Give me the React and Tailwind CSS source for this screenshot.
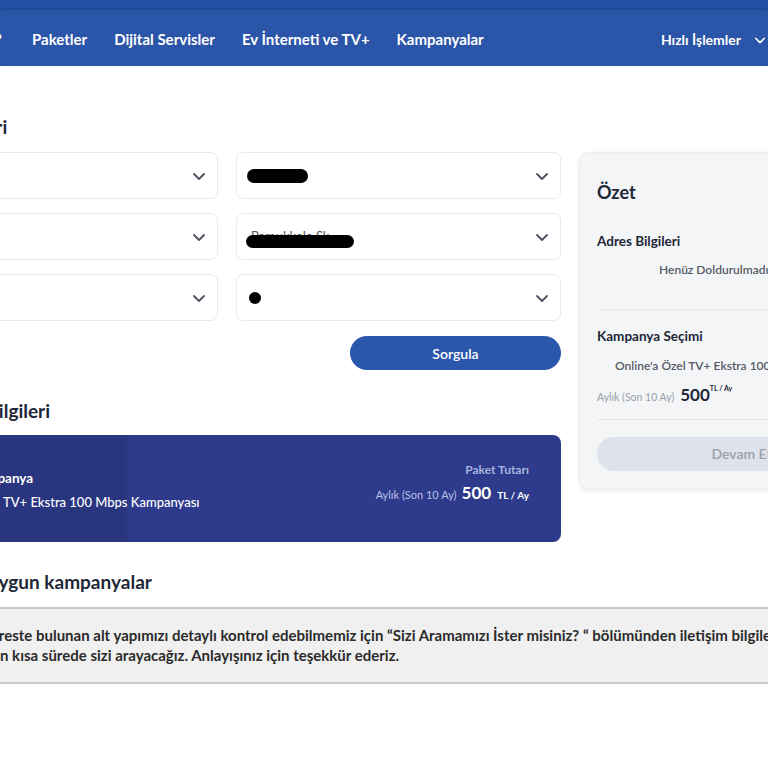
import React from "react";

function Chevron({ className = "" }) {
  return (
    <svg viewBox="0 0 16 16" className={className} fill="none" stroke="currentColor" strokeWidth="1.8" strokeLinecap="round" strokeLinejoin="round">
      <path d="M3 6l5 5 5-5" />
    </svg>
  );
}

function Select({ children }) {
  return (
    <div className="relative h-[47px] rounded-[7px] border border-[#e9eaee] bg-white flex items-center pl-[10px] pr-[10px]">
      <div className="flex-1 relative h-full flex items-center">{children}</div>
      <Chevron className="w-[16px] h-[16px] text-[#4b5162]" />
    </div>
  );
}

export default function App() {
  return (
    <div className="w-[768px] h-[768px] overflow-hidden bg-white relative font-['Lato',sans-serif] text-[#1f2937]">
      {/* header */}
      <div className="h-[10px] bg-[#244fa3]" />
      <div className="h-[56px] bg-[#2b55a9] flex items-center pt-[3px] text-white text-[15px] font-bold shadow-[0_-1px_3px_rgba(0,0,0,0.15)]">
        <span className="text-[15px] leading-none ml-[-5px] w-[9px] overflow-hidden">?</span>
        <div className="ml-[28px] flex items-center gap-[27px]">
          <span>Paketler</span>
          <span>Dijital Servisler</span>
          <span>Ev İnterneti ve TV+</span>
          <span>Kampanyalar</span>
        </div>
        <div className="ml-auto flex items-center gap-[12px] pr-[1px] text-[14px]">
          <span>Hızlı İşlemler</span>
          <Chevron className="w-[14px] h-[14px]" />
        </div>
      </div>

      {/* main */}
      <div className="flex gap-[18px] ml-[-107px] pt-[49px]">
        {/* left column */}
        <div className="w-[668px] shrink-0">
          <h2 className="text-[19px] leading-[24px] font-bold text-[#1e2737] mb-[13px] ml-[-3px]">Adres Bilgileri</h2>
          <div className="grid grid-cols-2 gap-x-[18px] gap-y-[14px]">
            <Select />
            <Select>
              <span className="block w-[61px] h-[14px] bg-black rounded-full" />
            </Select>
            <Select />
            <Select>
              <span className="text-[13px] text-[#555] ml-[4px]">Pamukkale Sk.</span>
              <span className="absolute left-[-1px] top-[21px] w-[108px] h-[13px] bg-black rounded-full" />
            </Select>
            <Select />
            <Select>
              <span className="block w-[12px] h-[12px] bg-black rounded-full ml-[2px]" />
            </Select>
          </div>
          <div className="flex justify-end mt-[15px]">
            <button className="w-[211px] h-[34px] rounded-full bg-[#2a56ab] text-white text-[14px] font-semibold">Sorgula</button>
          </div>

          <h2 className="text-[19px] leading-[24px] font-bold text-[#1e2737] mt-[29px] mb-[12px]">Kampanya Bilgileri</h2>
          <div className="h-[107px] rounded-[8px] flex items-stretch text-white bg-[linear-gradient(to_right,#29357f_0px,#29357f_232px,#2e3b8c_236px,#2e3b8c_100%)]">
            <div className="flex flex-col justify-center pl-[31px] pt-[3px]">
              <div className="text-[13.5px] font-bold leading-[24px]">Seçilen Kampanya</div>
              <div className="text-[13px] leading-[24px] font-medium">Online'a Özel TV+ Ekstra 100 Mbps Kampanyası</div>
            </div>
            <div className="ml-auto pr-[32px] pt-[27px] flex flex-col items-end">
              <div className="text-[12px] font-bold text-[#aab3df] leading-[16px]">Paket Tutarı</div>
              <div className="flex items-baseline gap-[5px] mt-[2px]">
                <span className="text-[11px] text-[#b9c1e8]">Aylık (Son 10 Ay)</span>
                <span className="text-[17px] font-bold">500</span>
                <span className="text-[10px] font-bold ml-[1px]">TL / Ay</span>
              </div>
            </div>
          </div>

          <h2 className="text-[19px] leading-[24px] font-bold text-[#1e2737] mt-[28px] ml-[2px]">Adresinize uygun kampanyalar</h2>
        </div>

        {/* right column */}
        <div className="w-[325px] shrink-0 mt-[37px]">
          <div className="h-[338px] rounded-[10px] bg-[#f4f5f7] border border-[#eceef1] shadow-[0_1px_4px_rgba(0,0,0,0.08)] px-[17px] pt-[27px]">
            <div className="text-[18px] leading-[24px] font-bold text-[#1e2737]">Özet</div>
            <div className="text-[13.5px] leading-[20px] font-bold text-[#1e2737] mt-[27px]">Adres Bilgileri</div>
            <div className="text-[12px] leading-[18px] font-semibold text-[#555b66] mt-[10px] pl-[62px] whitespace-nowrap">Henüz Doldurulmadı</div>
            <div className="h-px bg-[#e4e6ea] mt-[30px]" />
            <div className="text-[13.5px] leading-[20px] font-bold text-[#1e2737] mt-[16px]">Kampanya Seçimi</div>
            <div className="text-[12px] leading-[18px] font-semibold text-[#555b66] mt-[11px] pl-[18px] whitespace-nowrap">Online'a Özel TV+ Ekstra 100 Mbps Kampanyası</div>
            <div className="flex items-baseline mt-[7px] whitespace-nowrap">
              <span className="text-[10.5px] text-[#9aa0ab]">Aylık (Son 10 Ay)</span>
              <span className="text-[17px] font-bold text-[#1e2737] ml-[6px]">500</span>
              <span className="text-[7px] font-bold text-[#1e2737] self-start mt-[1px]">TL / Ay</span>
            </div>
            <div className="h-px bg-[#e4e6ea] mt-[11px]" />
            <button className="mt-[17px] w-full h-[34px] rounded-full bg-[#dee2ea] text-[#9aa0ad] text-[14px] font-semibold">Devam Et</button>
          </div>
        </div>
      </div>

      {/* info banner */}
      <div className="mt-[13px] border-y-2 border-[#c9c9c9] bg-[#f0f0f0] h-[77px] pt-[17px] overflow-hidden">
        <div className="ml-[-20px] text-[15px] leading-[19.5px] font-bold text-[#2b2b2b] whitespace-nowrap">
          <div>Adreste bulunan alt yapımızı detaylı kontrol edebilmemiz için “Sizi Aramamızı İster misiniz? “ bölümünden iletişim bilgilerinizi bırakmanız durumunda</div>
          <div className="ml-[12px]">en kısa sürede sizi arayacağız. Anlayışınız için teşekkür ederiz.</div>
        </div>
      </div>
    </div>
  );
}
